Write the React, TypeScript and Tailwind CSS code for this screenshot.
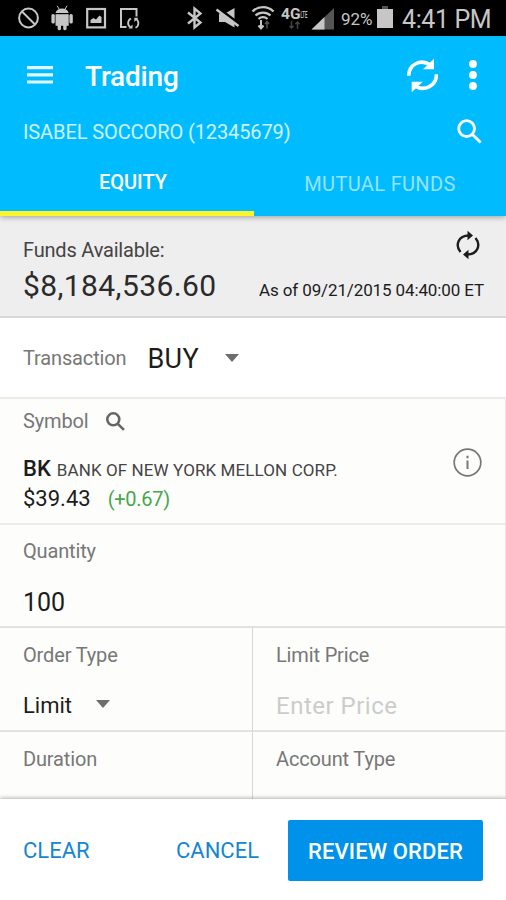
import type { ReactNode } from 'react'

function Caret() {
  return (
    <svg className="h-2 w-3.5 shrink-0" viewBox="0 0 14 8" fill="#6e6e6e">
      <path d="M0 0h14L7 8z" />
    </svg>
  )
}

function SearchIcon({ className, stroke }: { className: string; stroke: number }) {
  return (
    <svg className={className} viewBox="0 0 25 25" fill="none" stroke="currentColor" strokeWidth={stroke}>
      <circle cx="9.6" cy="9.6" r="7.9" />
      <path d="M15.2 15.2L23.6 23.6" />
    </svg>
  )
}

function StatusBar() {
  return (
    <div className="flex h-9 shrink-0 items-center bg-black text-[#c6c6c6]">
      <svg className="h-9 w-[340px] shrink-0" viewBox="0 0 340 36" fill="none" stroke="currentColor">
        {/* blocked */}
        <circle cx="28.5" cy="18" r="9.4" strokeWidth="2" />
        <path d="M22 11.5l13 13" strokeWidth="2" />
        {/* android */}
        <g fill="currentColor" stroke="none">
          <path d="M55.5 13a6.8 6 0 0 1 13.2 0z" />
          <path d="M55.5 14.2h13.2v11.6H55.5z" />
          <rect x="51.4" y="14" width="3.4" height="9.5" rx="1.6" />
          <rect x="69.4" y="14" width="3.4" height="9.5" rx="1.6" />
          <rect x="57.6" y="24" width="3.4" height="6.2" rx="1.4" />
          <rect x="63.2" y="24" width="3.4" height="6.2" rx="1.4" />
        </g>
        <path d="M59 9l-1.8-3.2M65.2 9L67 5.8" strokeWidth="1" />
        {/* picture */}
        <rect x="87.2" y="9" width="17.8" height="18.4" strokeWidth="2.2" />
        <path d="M90.5 23v-3l3-2 2.5 1.5 3.500-4 2 1.5v6z" fill="currentColor" stroke="none" />
        {/* document sync */}
        <path d="M126.5 27H121V9h15.5v7.5" strokeWidth="2" />
        <path d="M131 18.5a5 5 0 0 0-.5 8.8M135.5 27.8a5 5 0 0 0 .5-8.8" strokeWidth="1.8" />
        <path d="M128.5 28.5h4v-4zM138.5 17.8h-4.2v4.2z" fill="currentColor" stroke="none" />
        {/* bluetooth */}
        <path d="M188 12.5l12.5 10-6 5V8.5l6 5-12.5 10" strokeWidth="2.4" />
        {/* muted */}
        <path d="M219 13.5h6l9.5-5.5v19.5L225 22h-6z" fill="currentColor" stroke="none" />
        <path d="M218.5 8.5l22 16.5" stroke="#000" strokeWidth="3" />
        <path d="M216.5 9.500l22 16.5" strokeWidth="2.4" />
        {/* wifi */}
        <path d="M252.5 11.5a15 15 0 0 1 21 0M255.5 15.5a11 11 0 0 1 15 0M258.5 19a6.5 6.5 0 0 1 9 0" strokeWidth="2.3" />
        <path d="M261 20v8M258.5 25.5l2.5 3 2.5-3" strokeWidth="2" />
        <path d="M267 28.5v-6.5M265 24l2-2.5 2 2.5" stroke="#555" strokeWidth="1.5" />
        {/* network */}
        <text x="281" y="19" fontSize="15" fontWeight="700" fontFamily="Roboto" fill="currentColor" stroke="none" textLength="19.5" lengthAdjust="spacingAndGlyphs">4G</text>
        <text x="300.5" y="18" fontSize="9" fontWeight="500" fontFamily="Roboto" fill="currentColor" stroke="none" textLength="7" lengthAdjust="spacingAndGlyphs">LTE</text>
        <path d="M291.5 21v7M289.5 26l2 2 2-2M297.5 29v-7M295.5 24l2-2 2 2" stroke="#444" strokeWidth="1.5" />
        {/* signal */}
        <path d="M311.5 29.5L334 8v21.5z" fill="#555" stroke="none" />
        <path d="M311.5 29.5L324.5 17v12.5z" fill="currentColor" stroke="none" />
      </svg>
      <span className="ml-px w-9 pt-px text-[17px] leading-9">92%</span>
      <svg className="h-9 w-4 shrink-0" viewBox="0 0 16 36">
        <path d="M5 6h6v3H5z" fill="#555" />
        <path d="M0 9h16v19H0z" fill="currentColor" />
      </svg>
      <span className="ml-[9px] pt-[3px] text-[25px] leading-9 tracking-[-0.4px] whitespace-nowrap">4:41 PM</span>
    </div>
  )
}

function Header() {
  return (
    <header className="relative z-10 flex h-[180px] shrink-0 flex-col bg-[#00bcff] text-white shadow-[0_1px_6px_rgba(0,0,0,0.35)]">
      <div className="flex h-[77px] items-center pt-px pr-[29px] pl-[27px]">
        <svg className="h-[18px] w-[26px]" viewBox="0 0 26 18" fill="currentColor" opacity=".9">
          <path d="M0 0h26v3.2H0zM0 7.2h26v3.2H0zM0 14.4h26v3.2H0z" />
        </svg>
        <h1 className="ml-8 pt-1 text-[28px] leading-9 font-medium tracking-[-0.2px]">Trading</h1>
        <svg className="mr-[31px] ml-auto h-[35px] w-8" viewBox="0 0 32 35" fill="none" stroke="currentColor" strokeWidth="3.6">
          <path d="M2.7 17.7C2.7 7 14 0 24.5 7" />
          <path d="M30.5 16.3C30.5 27.5 18.5 34 9 28" />
          <path d="M28 .7v10.6H17zM5.7 23.7h11l-11 10.6z" fill="currentColor" stroke="none" />
        </svg>
        <svg className="h-[30px] w-2" viewBox="0 0 8 30" fill="currentColor">
          <circle cx="4" cy="4" r="3.9" />
          <circle cx="4" cy="15" r="3.9" />
          <circle cx="4" cy="26" r="3.9" />
        </svg>
      </div>
      <div className="flex h-9 items-center justify-between pr-6 pl-[23px]">
        <span className="pt-0.5 text-xl tracking-[-0.1px] whitespace-nowrap text-white/80">ISABEL SOCCORO (12345679)</span>
        <SearchIcon className="h-[25px] w-[25px]" stroke={2.8} />
      </div>
      <nav className="flex grow text-xl">
        <div className="w-[254px] border-b-[5px] border-[#fbf52b] pt-[19px] pl-3 text-center leading-7 font-medium">EQUITY</div>
        <div className="grow pt-[21px] text-center leading-7 tracking-[0.35px] text-white/60">MUTUAL FUNDS</div>
      </nav>
    </header>
  )
}

function Label({ children }: { children: ReactNode }) {
  return <div className="text-xl leading-6 tracking-[-0.15px] whitespace-nowrap text-[#777]">{children}</div>
}

export default function App() {
  return (
    <div className="flex h-[900px] w-[506px] flex-col overflow-hidden bg-[#fdfdfc] font-['Roboto',sans-serif] text-[#1c1c1c]">
      <StatusBar />
      <Header />

      <section className="flex h-[102px] shrink-0 justify-between border-b-2 border-[#d8d8d8] bg-[#eee] pr-[22px] pl-[23px]">
        <div className="pt-[22px] whitespace-nowrap">
          <div className="text-xl leading-6 tracking-[-0.2px] text-[#444]">Funds Available:</div>
          <div className="text-[30px] leading-[48px] tracking-[0.4px] text-[#2a2a2a]">$8,184,536.60</div>
        </div>
        <div className="flex flex-col items-end pt-[14px]">
          <svg className="mr-1 h-[30px] w-6" viewBox="0 0 24 30" fill="none" stroke="currentColor" strokeWidth="2.4">
            <path d="M4.5 22C-1 15.500 2 5.5 13 5.5M19.5 8C25 14.5 22 24.5 11 24.5" />
            <path d="M11.5 .8l5.5 4.7-5.5 4.7zM12.5 19.8L7 24.5l5.5 4.7z" fill="currentColor" stroke="none" />
          </svg>
          <div className="mt-[18px] text-[17px] leading-6 tracking-[-0.12px] whitespace-nowrap">As of 09/21/2015 04:40:00 ET</div>
        </div>
      </section>

      <section className="flex h-[81px] shrink-0 items-center border-b-2 border-[#ebebe8] bg-white pt-px pl-[23px]">
        <Label>Transaction</Label>
        <span className="ml-[21px] pt-px text-[27px] leading-8 tracking-[0.4px]">BUY</span>
        <div className="ml-[26px]">
          <Caret />
        </div>
      </section>

      <div className="flex shrink-0 flex-col border-r border-[#e8e8e8]">
        <section className="flex h-[126px] shrink-0 justify-between border-b-2 border-[#ebebeb] pr-[23px] pl-[23px]">
          <div className="whitespace-nowrap">
            <div className="flex items-center pt-2.5 text-[#666]">
              <Label>Symbol</Label>
              <SearchIcon className="ml-[18px] h-[19px] w-[19px]" stroke={3.4} />
            </div>
            <div className="mt-[19px] flex h-8 items-baseline gap-1.5">
              <span className="text-[22px] font-medium">BK</span>
              <span className="text-[17px] tracking-[0.1px] text-[#444]">BANK OF NEW YORK MELLON CORP.</span>
            </div>
            <div className="mt-px flex items-baseline gap-[17px]">
              <span className="text-[22px] leading-7">$39.43</span>
              <span className="text-xl leading-7 tracking-[-0.25px] text-[#45a74e]">(+0.67)</span>
            </div>
          </div>
          <svg className="mt-[49px] h-[29px] w-[29px]" viewBox="0 0 29 29" fill="none" stroke="#777" strokeWidth="1.7">
            <circle cx="14.5" cy="14.5" r="13.3" />
            <path d="M14.5 12.5v8.5M14.5 7.8v2.4" strokeWidth="2" />
          </svg>
        </section>

        <section className="h-[103px] shrink-0 border-b-2 border-[#e2e2e2] pt-3.5 pl-[23px]">
          <Label>Quantity</Label>
          <div className="mt-6 text-[25px] leading-8">100</div>
        </section>

        <section className="grid h-[171px] shrink-0 grid-cols-[253px_1fr] grid-rows-[104px_1fr]">
          <div className="border-r border-b-2 border-r-[#d6d6d6] border-b-[#e2e2e2] pt-[15px] pl-[23px]">
            <Label>Order Type</Label>
            <div className="mt-[23px] flex items-center text-[22px] leading-8">
              Limit
              <div className="-mt-1 ml-6 flex">
                <Caret />
              </div>
            </div>
          </div>
          <div className="border-b-2 border-[#e2e2e2] pt-[15px] pl-[23px]">
            <Label>Limit Price</Label>
            <div className="mt-[23px] text-2xl leading-8 tracking-[0.5px] text-[#ccc]">Enter Price</div>
          </div>
          <div className="border-r border-[#d6d6d6] pt-[15px] pl-[23px]">
            <Label>Duration</Label>
          </div>
          <div className="pt-[15px] pl-[23px]">
            <Label>Account Type</Label>
          </div>
        </section>
      </div>

      <footer className="relative z-10 flex grow items-center bg-white pt-px pl-[23px] text-[22px] text-[#1486d0] shadow-[0_-1px_4px_rgba(0,0,0,0.3)]">
        <span className="w-[153px] pt-px">CLEAR</span>
        <span className="w-[112px] pt-px">CANCEL</span>
        <button className="h-[61px] w-[195px] rounded-xs bg-[#0092ea] pt-0.5 text-[22px] font-medium tracking-[0.1px] whitespace-nowrap text-white">REVIEW ORDER</button>
      </footer>
    </div>
  )
}
